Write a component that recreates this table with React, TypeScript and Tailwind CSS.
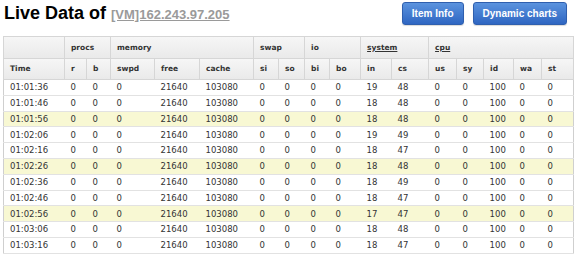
const cols = [
  { key: 'Time', w: 61 },
  { key: 'r', w: 22 },
  { key: 'b', w: 24 },
  { key: 'swpd', w: 44 },
  { key: 'free', w: 45 },
  { key: 'cache', w: 54 },
  { key: 'si', w: 25 },
  { key: 'so', w: 26 },
  { key: 'bi', w: 25 },
  { key: 'bo', w: 31 },
  { key: 'in', w: 31 },
  { key: 'cs', w: 37 },
  { key: 'us', w: 28 },
  { key: 'sy', w: 27 },
  { key: 'id', w: 30 },
  { key: 'wa', w: 28 },
  { key: 'st', w: 32 },
];

const groups = [
  { label: '', span: 1 },
  { label: 'procs', span: 2 },
  { label: 'memory', span: 3 },
  { label: 'swap', span: 2 },
  { label: 'io', span: 2 },
  { label: 'system', span: 2, link: true },
  { label: 'cpu', span: 5, link: true },
];

const samples: [string, string, string][] = [
  ['01:01:36', '19', '48'],
  ['01:01:46', '18', '48'],
  ['01:01:56', '18', '48'],
  ['01:02:06', '19', '49'],
  ['01:02:16', '18', '47'],
  ['01:02:26', '18', '48'],
  ['01:02:36', '18', '49'],
  ['01:02:46', '18', '47'],
  ['01:02:56', '17', '47'],
  ['01:03:06', '18', '48'],
  ['01:03:16', '18', '47'],
];

function Button({ children }: { children: string }) {
  return (
    <button className="h-[23px] px-[9px] rounded-[3px] border border-[#2f5fae] bg-gradient-to-b from-[#5b93de] to-[#2f66c2] text-white text-[10px] font-bold shadow-[0_1px_1px_rgba(0,0,0,0.15)] font-['Liberation_Sans',Arial,sans-serif]">
      {children}
    </button>
  );
}

export default function App() {
  return (
    <div className="w-[576px] h-[259px] bg-white overflow-hidden">
      <div className="flex items-center justify-between h-[25px] pl-[4px] pr-[9px] pt-[1px]">
        <h1 className="flex items-baseline gap-[5px] font-['Liberation_Sans',Arial,sans-serif]">
          <span className="text-[18px] font-bold text-black leading-none">Live Data of</span>
          <a className="text-[13px] font-bold text-[#9a9a9a] underline leading-none">[VM]162.243.97.205</a>
        </h1>
        <div className="flex gap-[9px]">
          <Button>Item Info</Button>
          <Button>Dynamic charts</Button>
        </div>
      </div>

      <table className="mt-[11px] ml-[3px] w-[570px] table-fixed border-collapse border border-[#cfcfcf] font-['DejaVu_Sans',Verdana,sans-serif]">
        <colgroup>
          {cols.map((c) => (
            <col key={c.key} style={{ width: c.w }} />
          ))}
        </colgroup>
        <thead className="text-[7.5px] font-bold text-[#333]">
          <tr className="h-[22px] bg-gradient-to-b from-[#f6f6f6] to-[#e9e9e9]">
            {groups.map((g, i) => (
              <th
                key={i}
                colSpan={g.span}
                className="text-left pl-[6px] border border-[#d6d6d6] font-bold"
              >
                {g.link ? <span className="underline">{g.label}</span> : g.label}
              </th>
            ))}
          </tr>
          <tr className="h-[21px] bg-gradient-to-b from-[#f6f6f6] to-[#e9e9e9]">
            {cols.map((c) => (
              <th key={c.key} className="text-left pl-[6px] border border-[#d6d6d6] font-bold">
                {c.key}
              </th>
            ))}
          </tr>
        </thead>
        <tbody className="text-[8.5px] text-[#333]">
          {samples.map(([time, inn, cs], i) => {
            const vals = [time, '0', '0', '0', '21640', '103080', '0', '0', '0', '0', inn, cs, '0', '0', '100', '0', '0'];
            return (
              <tr
                key={time}
                className={`h-[15.8px] border-b border-[#e2e2e2] ${i % 3 === 2 ? 'bg-[#f8f8d3]' : 'bg-white'}`}
              >
                {vals.map((v, j) => (
                  <td key={j} className="pl-[6px] leading-none whitespace-nowrap">
                    {v}
                  </td>
                ))}
              </tr>
            );
          })}
        </tbody>
      </table>
    </div>
  );
}
